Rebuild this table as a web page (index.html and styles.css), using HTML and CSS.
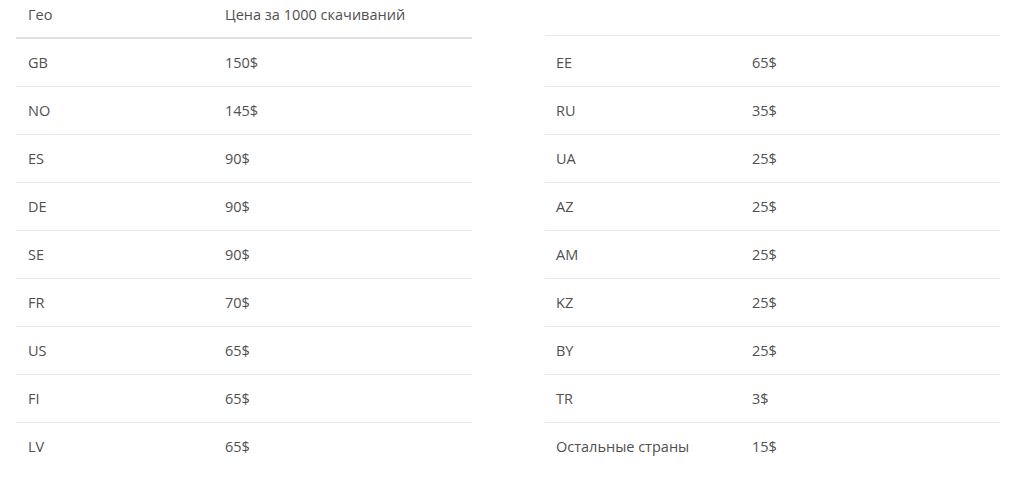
FILE: index.html
```html
<!DOCTYPE html>
<html lang="ru">
<head>
<meta charset="utf-8">
<link rel="stylesheet" href="styles.css">
</head>
<body>
<div class="page">
  <div class="tbl tbl-left">
    <div class="head"><span class="c1">Гео</span><span class="c2">Цена за 1000 скачиваний</span></div>
    <div class="row"><span class="c1">GB</span><span class="c2">150$</span></div>
    <div class="row"><span class="c1">NO</span><span class="c2">145$</span></div>
    <div class="row"><span class="c1">ES</span><span class="c2">90$</span></div>
    <div class="row"><span class="c1">DE</span><span class="c2">90$</span></div>
    <div class="row"><span class="c1">SE</span><span class="c2">90$</span></div>
    <div class="row"><span class="c1">FR</span><span class="c2">70$</span></div>
    <div class="row"><span class="c1">US</span><span class="c2">65$</span></div>
    <div class="row"><span class="c1">FI</span><span class="c2">65$</span></div>
    <div class="row"><span class="c1">LV</span><span class="c2">65$</span></div>
  </div>
  <div class="tbl tbl-right">
    <div class="head"></div>
    <div class="row"><span class="c1">EE</span><span class="c2">65$</span></div>
    <div class="row"><span class="c1">RU</span><span class="c2">35$</span></div>
    <div class="row"><span class="c1">UA</span><span class="c2">25$</span></div>
    <div class="row"><span class="c1">AZ</span><span class="c2">25$</span></div>
    <div class="row"><span class="c1">AM</span><span class="c2">25$</span></div>
    <div class="row"><span class="c1">KZ</span><span class="c2">25$</span></div>
    <div class="row"><span class="c1">BY</span><span class="c2">25$</span></div>
    <div class="row"><span class="c1">TR</span><span class="c2">3$</span></div>
    <div class="row"><span class="c1">Остальные страны</span><span class="c2">15$</span></div>
  </div>
</div>
</body>
</html>
```

FILE: styles.css
```css
html, body {
  margin: 0;
  padding: 0;
  background: #fff;
}
body {
  font-family: "Open Sans", "Noto Sans", sans-serif;
  font-size: 14.5px;
  color: #505050;
}
.page {
  display: flex;
  padding-left: 16px;
  gap: 73px;
}
.tbl {
  display: flex;
  flex-direction: column;
}
.tbl-left { width: 456px; }
.tbl-right { width: 455px; }
.head {
  height: 39px;
  display: flex;
  align-items: flex-start;
  padding-top: 5px;
  box-sizing: border-box;
  border-bottom: 2px solid #e0e0e0;
}
.tbl-right .head {
  height: 36px;
  border-bottom: 1px solid #e8e8e8;
}
.row {
  height: 47px;
  display: flex;
  align-items: center;
  border-top: 1px solid #e6e6e6;
}
.head + .row { border-top: none; }
.tbl-right .head + .row {
  height: 50px;
  padding-top: 4px;
  box-sizing: border-box;
}
.c1, .c2 {
  line-height: 20px;
}
.tbl-left .c1 { width: 197px; padding-left: 12px; }
.tbl-right .c1 { width: 196px; padding-left: 11px; }
```
